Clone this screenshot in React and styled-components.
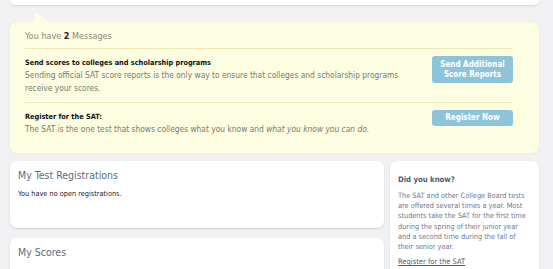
import React from "react";
import styled, { createGlobalStyle } from "styled-components";

const Global = createGlobalStyle`
  html, body { margin: 0; padding: 0; background: #f1f1f4; }
  body { font-family: "DejaVu Sans Condensed", "DejaVu Sans", Verdana, sans-serif; font-stretch: condensed; overflow: hidden; }
`;

const Page = styled.div`
  width: 529px;
  margin-left: 10px;
`;

const TopCard = styled.div`
  height: 5px;
  background: #fff;
  border-radius: 0 0 7px 7px;
  box-shadow: 0 1px 2px rgba(0,0,0,0.12);
`;

const MessageBox = styled.div`
  position: relative;
  margin-top: 17px;
  background: #fdfde1;
  border-radius: 6px;
  padding: 0 26px 0 15px;
  box-shadow: 0 0 1px rgba(180,180,120,0.5);
  &::before {
    content: "";
    position: absolute;
    left: 24px;
    top: -10px;
    width: 0;
    height: 0;
    border-left: 1px solid transparent;
    border-right: 14px solid transparent;
    border-bottom: 10px solid #fdfde1;
  }
`;

const MsgHeader = styled.div`
  height: 25px;
  display: flex;
  align-items: center;
  padding-top: 1px;
  font-size: 9px;
  color: #8a8a80;
  border-bottom: 1px solid #eee9b4;
  b { color: #222; font-weight: bold; }
`;

const MsgRow = styled.div`
  display: flex;
  justify-content: space-between;
  align-items: flex-start;
  padding: ${(p) => p.$pad};
  border-bottom: ${(p) => (p.$last ? "none" : "1px solid #eee9b4")};
`;

const MsgText = styled.div`
  width: 390px;
`;

const MsgTitle = styled.div`
  font-size: 7.3px;
  font-weight: bold;
  color: #111;
  line-height: 13px;
`;

const MsgBody = styled.div`
  font-size: 8.35px;
  color: #7a7a70;
  line-height: 13px;
  i { font-style: italic; }
`;

const ActionButton = styled.div`
  width: 81px;
  height: ${(p) => p.$h}px;
  background: #8ec4d9;
  border-radius: 3px;
  color: #fff;
  font-size: 8px;
  font-weight: bold;
  line-height: 10px;
  display: flex;
  align-items: center;
  justify-content: center;
  text-align: center;
  flex-shrink: 0;
`;

const Grid = styled.div`
  display: grid;
  grid-template-columns: 374px 149px;
  column-gap: 6px;
  margin-top: 8px;
  align-items: start;
`;

const Column = styled.div`
  display: flex;
  flex-direction: column;
  gap: 10px;
`;

const Card = styled.div`
  background: #fff;
  border-radius: 7px;
  box-shadow: 0 1px 2px rgba(0,0,0,0.13);
  height: ${(p) => p.$h}px;
  padding: ${(p) => p.$pad};
  box-sizing: border-box;
`;

const CardTitle = styled.div`
  font-size: 10.5px;
  color: #5b6b80;
  line-height: 14px;
`;

const CardText = styled.div`
  font-size: 7.3px;
  color: #222;
  margin-top: 7px;
`;

const TipTitle = styled.div`
  font-size: 7.7px;
  font-weight: bold;
  color: #4d5d74;
  line-height: 12px;
`;

const TipBody = styled.div`
  font-size: 7.3px;
  color: #6e7890;
  line-height: 10.2px;
  margin-top: 5px;
`;

const TipLink = styled.a`
  display: block;
  font-size: 7.5px;
  color: #4d5d74;
  text-decoration: underline;
  margin-top: 5px;
`;

export default function App() {
  return (
    <>
      <Global />
      <Page>
        <TopCard />
        <MessageBox>
          <MsgHeader>
            <span>You have <b>2</b> Messages</span>
          </MsgHeader>
          <MsgRow $pad="7px 0 7px 0">
            <MsgText>
              <MsgTitle>Send scores to colleges and scholarship programs</MsgTitle>
              <MsgBody>
                Sending official SAT score reports is the only way to ensure that colleges and scholarship programs receive your scores.
              </MsgBody>
            </MsgText>
            <ActionButton $h={27}>Send Additional<br />Score Reports</ActionButton>
          </MsgRow>
          <MsgRow $pad="7px 0 17px 0" $last>
            <MsgText>
              <MsgTitle>Register for the SAT:</MsgTitle>
              <MsgBody>
                The SAT is the one test that shows colleges what you know and <i>what you know you can do.</i>
              </MsgBody>
            </MsgText>
            <ActionButton $h={16}>Register Now</ActionButton>
          </MsgRow>
        </MessageBox>
        <Grid>
          <Column>
            <Card $h={67} $pad="7px 8px">
              <CardTitle>My Test Registrations</CardTitle>
              <CardText>You have no open registrations.</CardText>
            </Card>
            <Card $h={60} $pad="7px 8px">
              <CardTitle>My Scores</CardTitle>
            </Card>
          </Column>
          <Card $h={120} $pad="13px 8px">
            <TipTitle>Did you know?</TipTitle>
            <TipBody>
              The SAT and other College Board tests are offered several times a year. Most students take the SAT for the first time during the spring of their junior year and a second time during the fall of their senior year.
            </TipBody>
            <TipLink>Register for the SAT</TipLink>
          </Card>
        </Grid>
      </Page>
    </>
  );
}
